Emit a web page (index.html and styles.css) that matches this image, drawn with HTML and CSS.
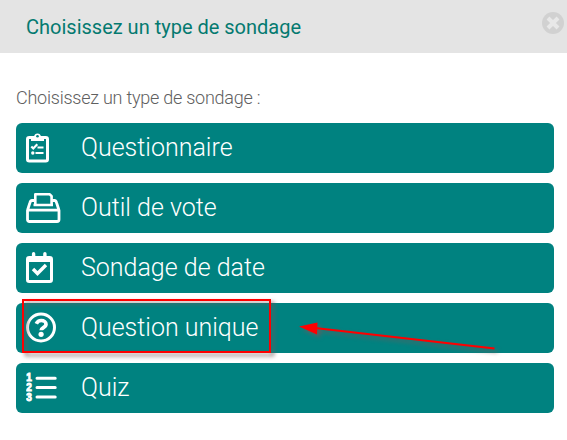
FILE: index.html
```html
<!DOCTYPE html>
<html lang="fr">
<head>
<meta charset="utf-8">
<title>Choisissez un type de sondage</title>
<link rel="stylesheet" href="styles.css">
</head>
<body>
<header class="header">
  <h1 class="title">Choisissez un type de sondage</h1>
  <svg class="close" width="22" height="22" viewBox="0 0 22 22"><circle cx="11" cy="11" r="11" fill="#d1d1d1"/><path d="M6 6l10 10M16 6l-10 10" stroke="#e8e8e8" stroke-width="4"/></svg>
</header>
<main class="content">
  <p class="intro">Choisissez un type de sondage :</p>
  <nav class="list">
    <a class="item">
      <svg class="icon" width="36" height="32" viewBox="0 0 36 32" fill="none" stroke="#fff">
        <rect x="1.500" y="5.500" width="20" height="23.500" rx="1.800" stroke-width="3"/>
        <path d="M5 9V5.500q0-1 1-1h2a3.600 4 0 0 1 7 0h2q1 0 1 1V9z" fill="#fff" stroke="none"/>
        <circle cx="11.500" cy="4.300" r="1.300" fill="#008280" stroke="none"/>
        <path d="M5.300 14.500l2 2 4-4.200" stroke-width="2.200"/>
        <path d="M11.500 15.500H17.500M9.500 21H17.500" stroke-width="2.200"/>
        <circle cx="6.800" cy="21" r="1.700" fill="#fff" stroke="none"/>
      </svg>
      <span class="label">Questionnaire</span>
    </a>
    <a class="item">
      <svg class="icon" width="36" height="32" viewBox="0 0 36 32" fill="none" stroke="#fff" stroke-linejoin="round">
        <path d="M1.500 18.200h31.500v9.300q0 2-2 2h-27.500q-2 0-2-2zM1.500 18.200L4 10.500q.6-2 2-2h2.500M33 18.200L30.500 10.500q-.6-2-2-2h-2.500" stroke-width="2.800"/>
        <path d="M9.300 13V2.300h14.500l1.800 1.800V13M7.500 13h19.500" stroke-width="2.600"/>
      </svg>
      <span class="label">Outil de vote</span>
    </a>
    <a class="item">
      <svg class="icon" width="36" height="32" viewBox="0 0 36 32" fill="none" stroke="#fff">
        <rect x="1.500" y="5.500" width="24" height="24" rx="1.800" stroke-width="3"/>
        <path d="M1.500 7.500h24" stroke-width="5"/>
        <path d="M7.600 1.700v5M18.900 1.700v5" stroke-width="3.400" stroke-linecap="round"/>
        <path d="M7 17l4.500 4.500 8.500-8.500" stroke-width="3.400"/>
      </svg>
      <span class="label">Sondage de date</span>
    </a>
    <a class="item">
      <svg class="icon" width="36" height="32" viewBox="0 0 36 32" fill="none" stroke="#fff">
        <circle cx="15" cy="15.500" r="13.500" stroke-width="3"/>
        <path d="M10.300 11.800c1-2.200 2.500-3.300 5-3.300 2.700 0 4.700 1.600 4.700 3.800 0 3.400-4.800 3.300-4.800 6" stroke-width="3.700"/>
        <circle cx="15.100" cy="22.300" r="2.600" fill="#fff" stroke="none"/>
      </svg>
      <span class="label">Question unique</span>
    </a>
    <a class="item">
      <svg class="icon" width="36" height="32" viewBox="0 0 36 32">
        <path d="M11 6.300h18.200M11 15.600h18.200M11 25h18.200" stroke="#fff" stroke-width="3" stroke-linecap="round"/>
        <text class="digit" x="0.300" y="9.200">1</text><text class="digit" x="0.300" y="18.900">2</text><text class="digit" x="0.300" y="28.600">3</text>
      </svg>
      <span class="label">Quiz</span>
    </a>
  </nav>
</main>
<div class="highlight"></div>
<svg class="arrow" width="210" height="40" viewBox="295 316 210 40">
  <path d="M315 328L494.500 348.500" stroke="#f00" stroke-width="2.200"/>
  <path d="M299 326.500L317.500 322.500 317 334.500z" fill="#f00"/>
</svg>
</body>
</html>
```
FILE: styles.css
```css
body {
  margin: 0;
  background: #fff;
  font-family: Roboto, "Liberation Sans", sans-serif;
  position: relative;
  height: 440px;
  overflow: hidden;
}
.header {
  display: flex;
  align-items: center;
  justify-content: space-between;
  box-sizing: border-box;
  height: 53px;
  padding: 0 3px 0 26px;
  background: #e4e4e4;
}
.title {
  margin: 1px 0 0;
  font-size: 20px;
  font-weight: 400;
  color: #047a70;
}
.close {
  margin-bottom: 7px;
}
.content {
  padding: 33px 13px 0 16px;
}
.intro {
  margin: 0 0 13px;
  font-size: 18px;
  font-weight: 300;
  line-height: 24px;
  letter-spacing: -0.24px;
  color: #606060;
}
.list {
  display: flex;
  flex-direction: column;
  gap: 10px;
}
.item {
  display: flex;
  align-items: center;
  box-sizing: border-box;
  height: 50px;
  padding: 0 10px;
  border-radius: 6px;
  background: #008280;
  color: #fff;
}
.icon {
  flex: none;
  margin-right: 19px;
}
.digit {
  font: 900 10px "Liberation Sans", sans-serif;
  fill: #fff;
  stroke: #fff;
  stroke-width: 0.9px;
}
.label {
  font-size: 25px;
  font-weight: 300;
  line-height: 50px;
}
.highlight {
  position: absolute;
  left: 22px;
  top: 299px;
  box-sizing: border-box;
  width: 249px;
  height: 54px;
  border: 2px solid #f00;
  filter: drop-shadow(3px 3px 2px rgba(110, 90, 90, 0.9));
}
.arrow {
  position: absolute;
  left: 295px;
  top: 316px;
  filter: drop-shadow(3px 3px 2px rgba(110, 90, 90, 0.8));
}
```
